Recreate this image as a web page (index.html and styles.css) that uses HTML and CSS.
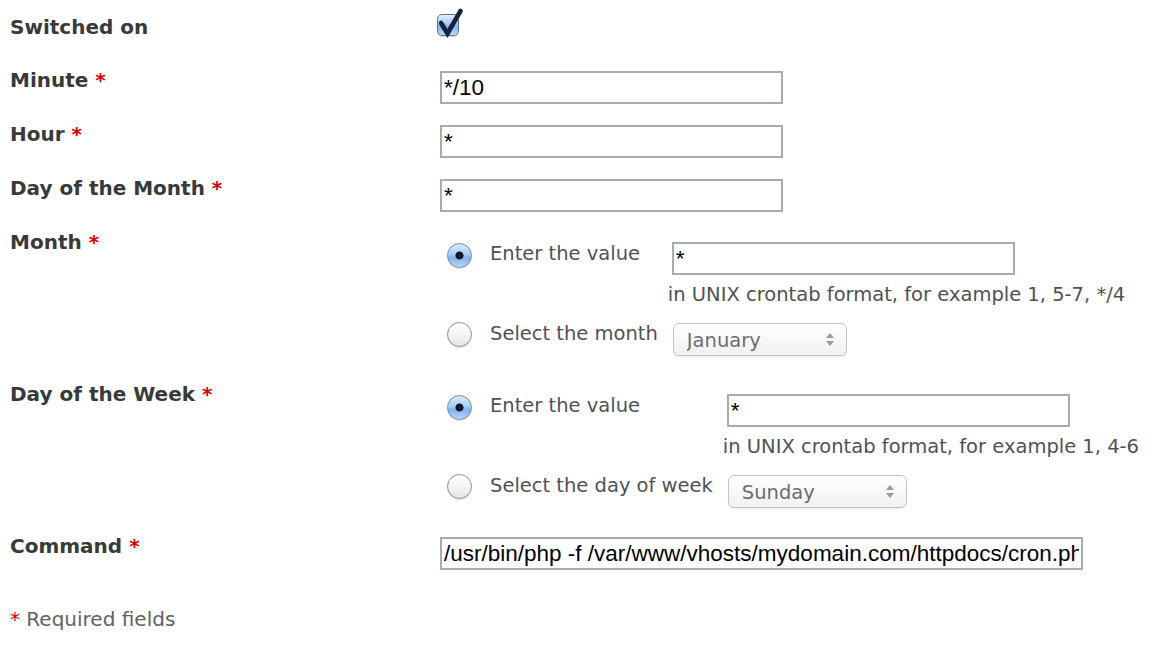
FILE: index.html
```html
<!DOCTYPE html>
<html>
<head>
<meta charset="utf-8">
<title>Scheduled task</title>
<link rel="stylesheet" href="styles.css">
</head>
<body>
<div class="form">
  <div class="row row-switch">
    <div class="label">Switched on</div>
    <div class="field">
      <span class="check">
        <input type="checkbox" checked>
        <svg class="tick" width="30" height="32" viewBox="0 0 30 32"><polyline points="6,16 12.5,26.5 25.5,4" fill="none" stroke="#16233a" stroke-width="4.6" stroke-linecap="round" stroke-linejoin="miter"/></svg>
      </span>
    </div>
  </div>
  <div class="row">
    <div class="label">Minute <span class="req">*</span></div>
    <div class="field"><input class="text" type="text" value="*/10"></div>
  </div>
  <div class="row">
    <div class="label">Hour <span class="req">*</span></div>
    <div class="field"><input class="text" type="text" value="*"></div>
  </div>
  <div class="row">
    <div class="label">Day of the Month <span class="req">*</span></div>
    <div class="field"><input class="text" type="text" value="*"></div>
  </div>
  <div class="row row-group">
    <div class="label">Month <span class="req">*</span></div>
    <div class="field">
      <div class="choices">
        <input class="radio radio-first" type="radio" name="month" checked>
        <span class="opt">Enter the value</span>
        <div class="cell">
          <input class="text" type="text" value="*">
          <div class="hint">in UNIX crontab format, for example 1, 5-7, */4</div>
        </div>
        <input class="radio" type="radio" name="month">
        <span class="opt">Select the month</span>
        <div class="cell">
          <span class="sel"><select class="sel-month"><option>January</option></select></span>
        </div>
      </div>
    </div>
  </div>
  <div class="row row-group">
    <div class="label">Day of the Week <span class="req">*</span></div>
    <div class="field">
      <div class="choices">
        <input class="radio radio-first" type="radio" name="week" checked>
        <span class="opt">Enter the value</span>
        <div class="cell">
          <input class="text" type="text" value="*">
          <div class="hint">in UNIX crontab format, for example 1, 4-6</div>
        </div>
        <input class="radio" type="radio" name="week">
        <span class="opt">Select the day of week</span>
        <div class="cell">
          <span class="sel"><select class="sel-week"><option>Sunday</option></select></span>
        </div>
      </div>
    </div>
  </div>
  <div class="row">
    <div class="label">Command <span class="req">*</span></div>
    <div class="field"><input class="text cmd" type="text" value="/usr/bin/php -f /var/www/vhosts/mydomain.com/httpdocs/cron.php"></div>
  </div>
  <div class="required"><span class="req-small">*</span> Required fields</div>
</div>
</body>
</html>
```

FILE: styles.css
```css
body {
  margin: 0;
  background: #fff;
  font-family: "DejaVu Sans", sans-serif;
}

.form {
  padding-left: 10px;
}

.row {
  display: flex;
  align-items: flex-start;
}

.label {
  width: 430px;
  flex: none;
  padding-top: 14px;
  font-weight: bold;
  font-size: 20px;
  line-height: 24px;
  color: #393939;
  white-space: nowrap;
}

.row-switch .label {
  padding-top: 15px;
}

.req {
  color: #d40000;
}

.field {
  box-sizing: border-box;
  height: 54px;
  padding-top: 17px;
}

.row-switch .field {
  padding-top: 14px;
}

.row-group .field {
  height: auto;
  padding: 26px 0 12px;
}

/* checkbox */
.check {
  position: relative;
  display: block;
  width: 22px;
  height: 22px;
  margin-left: -3px;
}

.check input {
  appearance: none;
  -webkit-appearance: none;
  display: block;
  box-sizing: border-box;
  width: 22px;
  height: 22px;
  margin: 0;
  border: 1px solid #66758c;
  border-radius: 5px;
  background: linear-gradient(#e2effd 0%, #a9cff6 40%, #7db6ef 58%, #b4dafc 100%);
  box-shadow: 0 1px 1px rgba(0, 0, 0, 0.18);
}

.tick {
  position: absolute;
  left: -2px;
  top: -7px;
}

/* text inputs */
.text {
  display: block;
  box-sizing: border-box;
  width: 343px;
  height: 33px;
  margin: 0;
  padding: 0 2px;
  border: 2px solid #a8acb1;
  background: #fff;
  font: 22.5px "Liberation Sans", sans-serif;
  color: #000;
  outline: none;
}

.cmd {
  width: 643px;
}

/* radio choices */
.choices {
  display: grid;
  grid-template-columns: auto auto auto;
  row-gap: 15px;
  align-items: start;
  padding-left: 7px;
}

.radio {
  appearance: none;
  -webkit-appearance: none;
  box-sizing: border-box;
  width: 25px;
  height: 25px;
  margin: 0 18px 0 0;
  border: 1px solid #8e8e8e;
  border-radius: 50%;
  background: linear-gradient(#ffffff 0%, #f4f4f4 50%, #e3e3e3 100%);
  box-shadow: 0 1px 1px rgba(0, 0, 0, 0.12);
}

.radio-first {
  margin-top: 1px;
}

.radio:checked {
  border-color: #6d8db5;
  background:
    radial-gradient(circle, #0f1b29 0 3.6px, transparent 4.4px),
    linear-gradient(#dcecfd 0%, #a9cdf4 45%, #7fb2ea 60%, #b8d8f8 100%);
}

.opt {
  margin-right: 10px;
  font-size: 19.5px;
  line-height: 24px;
  color: #4f5255;
  white-space: nowrap;
}

.cell .text {
  margin-left: 4px;
}

.hint {
  margin-top: 8px;
  font-size: 19.5px;
  line-height: 24px;
  color: #4f5255;
  white-space: nowrap;
}

/* select */
.sel {
  position: relative;
  display: inline-block;
  margin: 1px 0 0 5px;
}

.sel select {
  appearance: none;
  -webkit-appearance: none;
  display: block;
  box-sizing: border-box;
  height: 33px;
  margin: 0;
  padding: 2px 0 0 13px;
  border: 1px solid #c4c4c4;
  border-radius: 6px;
  background: linear-gradient(#ffffff, #f1f1f1);
  box-shadow: 0 1px 1px rgba(0, 0, 0, 0.08);
  font: 19.5px "DejaVu Sans", sans-serif;
  color: #6d6d6d;
  outline: none;
}

.sel-month {
  width: 174px;
}

.sel-week {
  width: 179px;
}

.sel::before,
.sel::after {
  content: "";
  position: absolute;
  right: 13px;
  border-left: 4px solid transparent;
  border-right: 4px solid transparent;
}

.sel::before {
  top: 10px;
  border-bottom: 5px solid #9a9a9a;
}

.sel::after {
  top: 18px;
  border-top: 5px solid #9a9a9a;
}

/* footer note */
.required {
  margin-top: 33px;
  font-size: 20px;
  line-height: 24px;
  color: #626262;
}

.req-small {
  color: #d40000;
}
```
